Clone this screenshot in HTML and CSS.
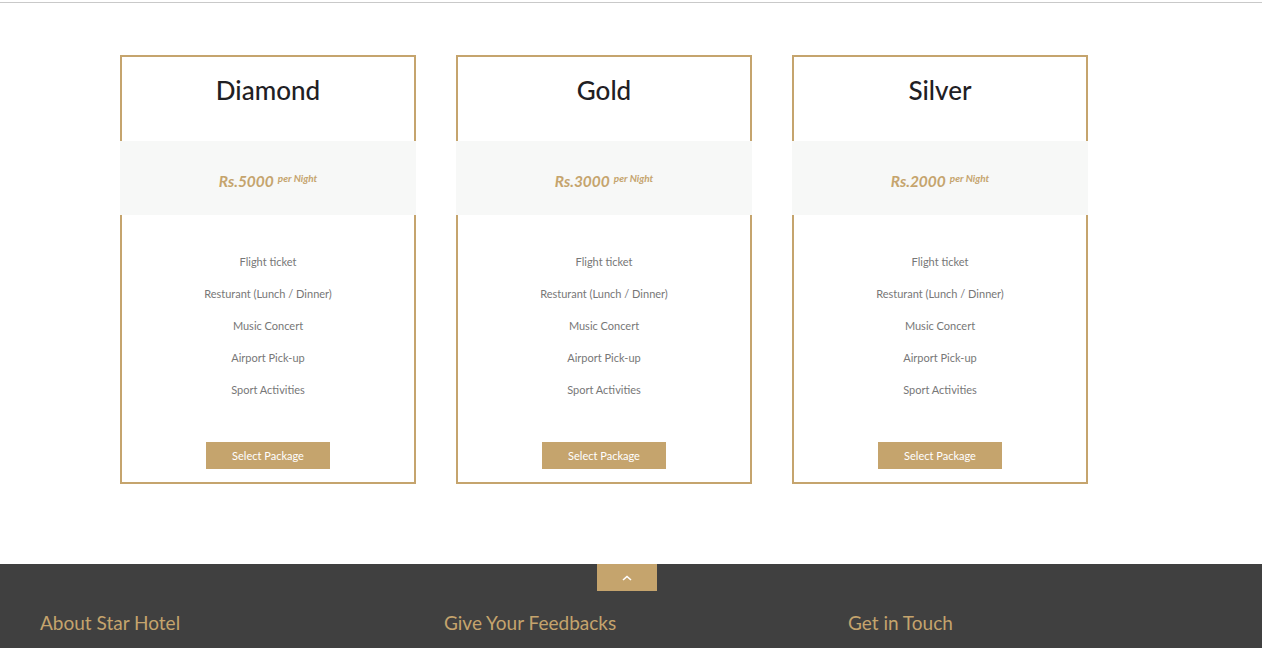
FILE: index.html
```html
<!DOCTYPE html>
<html lang="en">
<head>
<meta charset="utf-8">
<title>Packages</title>
<link rel="stylesheet" href="styles.css">
</head>
<body>
<div class="topline"></div>
<section class="packages">
  <div class="card">
    <h2 class="card-title">Diamond</h2>
    <div class="price"><span class="amount">Rs.5000</span><sup class="per">per Night</sup></div>
    <ul class="features">
      <li>Flight ticket</li>
      <li>Resturant (Lunch / Dinner)</li>
      <li>Music Concert</li>
      <li>Airport Pick-up</li>
      <li>Sport Activities</li>
    </ul>
    <div class="action"><a class="btn" href="#">Select Package</a></div>
  </div>
  <div class="card">
    <h2 class="card-title">Gold</h2>
    <div class="price"><span class="amount">Rs.3000</span><sup class="per">per Night</sup></div>
    <ul class="features">
      <li>Flight ticket</li>
      <li>Resturant (Lunch / Dinner)</li>
      <li>Music Concert</li>
      <li>Airport Pick-up</li>
      <li>Sport Activities</li>
    </ul>
    <div class="action"><a class="btn" href="#">Select Package</a></div>
  </div>
  <div class="card">
    <h2 class="card-title">Silver</h2>
    <div class="price"><span class="amount">Rs.2000</span><sup class="per">per Night</sup></div>
    <ul class="features">
      <li>Flight ticket</li>
      <li>Resturant (Lunch / Dinner)</li>
      <li>Music Concert</li>
      <li>Airport Pick-up</li>
      <li>Sport Activities</li>
    </ul>
    <div class="action"><a class="btn" href="#">Select Package</a></div>
  </div>
</section>
<footer class="footer">
  <a class="to-top" href="#"><svg width="10" height="6" viewBox="0 0 10 6"><path d="M1 5 L5 1.5 L9 5" fill="none" stroke="#fff" stroke-width="1.6"/></svg></a>
  <div class="footer-cols">
    <h3 class="footer-title">About Star Hotel</h3>
    <h3 class="footer-title">Give Your Feedbacks</h3>
    <h3 class="footer-title">Get in Touch</h3>
  </div>
</footer>
</body>
</html>
```
FILE: styles.css
```css
html, body {
  margin: 0;
  padding: 0;
  background: #fff;
  font-family: Lato, "Open Sans", sans-serif;
}
.topline {
  margin-top: 2px;
  height: 1px;
  background: #c9c9c9;
}
.packages {
  display: flex;
  gap: 40px;
  padding: 52px 0 80px 120px;
}
.card {
  width: 292px;
  border: 2px solid #c5a46d;
  display: flex;
  flex-direction: column;
}
.card-title {
  margin: 0;
  height: 84px;
  box-sizing: border-box;
  padding-top: 17px;
  font-size: 26px;
  line-height: 32px;
  font-weight: 500;
  color: #1f2024;
  text-align: center;
}
.price {
  margin: 0 -2px;
  height: 74px;
  box-sizing: border-box;
  padding-top: 6px;
  background: #f7f8f7;
  display: flex;
  align-items: center;
  justify-content: center;
  color: #c5a46d;
  font-style: italic;
  font-weight: 700;
}
.amount {
  font-size: 15.5px;
}
.per {
  font-size: 10px;
  margin-left: 4px;
  position: relative;
  top: -3px;
  vertical-align: top;
  line-height: 1;
}
.features {
  list-style: none;
  margin: 0;
  padding: 31px 0 0;
  text-align: center;
  font-size: 11px;
  line-height: 32px;
  color: #777;
}
.action {
  display: flex;
  justify-content: center;
  padding: 36px 0 13px;
}
.btn {
  display: block;
  width: 124px;
  height: 27px;
  line-height: 27px;
  background: #c5a46d;
  color: #fff;
  text-align: center;
  font-size: 11px;
  text-decoration: none;
}
.footer {
  position: relative;
  background: #404040;
  padding: 47px 0 20px 40px;
}
.to-top {
  position: absolute;
  left: 597px;
  top: 0;
  width: 60px;
  height: 27px;
  background: #c5a46d;
  display: flex;
  align-items: center;
  justify-content: center;
}
.footer-cols {
  display: grid;
  grid-template-columns: 404px 404px 404px;
}
.footer-title {
  margin: 0;
  font-size: 19px;
  line-height: 24px;
  font-weight: 400;
  color: #c5a46d;
}
```
